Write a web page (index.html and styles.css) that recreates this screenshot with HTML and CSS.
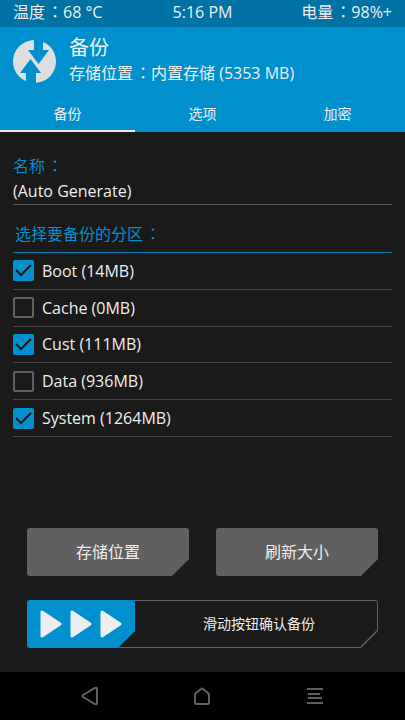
FILE: index.html
```html
<!DOCTYPE html>
<html lang="zh-CN">
<head>
<meta charset="utf-8">
<meta name="viewport" content="width=device-width, initial-scale=1">
<title>备份</title>
<link rel="stylesheet" href="styles.css">
</head>
<body>
<div class="status"><span>温度<span class="colon" lang="zh-TW">：</span>68 °C</span><span>5:16 PM</span><span>电量<span class="colon" lang="zh-TW">：</span>98%+</span></div>
<header class="header">
  <div class="brand">
    <svg class="logo" viewBox="0 0 43 43" aria-hidden="true">
      <circle cx="21.5" cy="21.5" r="21.5" fill="#dedede"/>
      <path fill="#0090cd" d="M21 0h9v10h6L25.500 24 15 10h6zM13 43V33H7l10.500-14L28 33h-5v10z"/>
    </svg>
    <div>
      <h1>备份</h1>
      <p>存储位置<span class="colon" lang="zh-TW">：</span>内置存储 (5353 MB)</p>
    </div>
  </div>
  <nav class="tabs">
    <a href="#backup" class="active" aria-current="page">备份</a>
    <a href="#options">选项</a>
    <a href="#encryption">加密</a>
  </nav>
</header>
<main class="main">
  <label class="caption" for="name">名称<span class="colon" lang="zh-TW">：</span></label>
  <input class="name" id="name" type="text" value="(Auto Generate)">
  <fieldset class="partitions">
    <legend>选择要备份的分区<span class="colon" lang="zh-TW">：</span></legend>
    <div class="list">
      <label><input type="checkbox" checked>Boot (14MB)</label>
      <label><input type="checkbox">Cache (0MB)</label>
      <label><input type="checkbox" checked>Cust (111MB)</label>
      <label><input type="checkbox">Data (936MB)</label>
      <label><input type="checkbox" checked>System (1264MB)</label>
    </div>
  </fieldset>
  <div class="actions">
    <div class="buttons">
      <button type="button">存储位置</button>
      <button type="button">刷新大小</button>
    </div>
    <button type="button" class="slider">
      <span class="handle">
        <svg viewBox="0 0 82 28" aria-hidden="true">
          <g fill="#eee" stroke="#eee" stroke-width="3" stroke-linejoin="round">
            <path d="M2 2v24l18-12zM32 2v24l18-12zM62 2v24l18-12z"/>
          </g>
        </svg>
      </span>
      <span class="hint">滑动按钮确认备份</span>
    </button>
  </div>
</main>
<nav class="navbar">
  <button type="button" aria-label="返回"><svg viewBox="0 0 20 20"><path d="M17 3v14q0 2-2 1L3 11q-1-1 0-2l12-7q2-1 2 1z"/></svg></button>
  <button type="button" aria-label="主页"><svg viewBox="0 0 20 20"><path d="M3 9q0-1 1-2l5-4q1-1 2 0l5 4q1 1 1 2v7q0 2-1 2H4q-1 0-1-2z"/></svg></button>
  <button type="button" aria-label="菜单"><svg viewBox="0 0 20 20"><path d="M2 3h16M3 8h12M3 12h14M2 17h16"/></svg></button>
</nav>
</body>
</html>
```
FILE: styles.css
```css
* { box-sizing: border-box; }

body {
  margin: 0;
  min-height: 100vh;
  display: flex;
  flex-direction: column;
  background: #1a1a1a;
  color: #eee;
  font: 16px/24px "Open Sans", "Noto Sans CJK SC", sans-serif;
}

button, input { font: inherit; color: inherit; }
h1, p { margin: 0; font-weight: 400; }

/* Full-width colon centred in its cell */
.colon {
  margin-left: 2px;
  font-family: "Noto Sans CJK TC", sans-serif;
  line-height: 1;
}

.status {
  display: grid;
  grid-template-columns: 1fr auto 1fr;
  height: 27px;
  padding: 0 13px;
  background: #0073a4;
}
.status > span:last-child { text-align: right; }

.header { background: #0090cd; }
.brand {
  display: flex;
  gap: 13px;
  padding: 7px 13px 0;
}
.logo { width: 43px; height: 43px; margin-top: 6px; }
h1 { font-size: 20px; line-height: 27px; }

.tabs { display: grid; grid-template-columns: repeat(3, 1fr); margin-top: 14px; }
.tabs a {
  height: 33px;
  border-bottom: 2px solid transparent;
  color: inherit;
  font-size: 14px;
  line-height: 30px;
  text-align: center;
  text-decoration: none;
}
.tabs .active { border-color: #eee; }

.main {
  flex: 1;
  display: flex;
  flex-direction: column;
  padding: 22px 13px 24px;
}
.caption { color: #0090cd; }
.name {
  width: 100%;
  height: 27px;
  padding: 0;
  border: 0;
  border-bottom: 1px solid #5a5a5a;
  background: none;
}

.partitions { margin: 17px 0 0; padding: 0; border: 0; min-width: 0; }
.partitions legend {
  width: 100%;
  height: 31px;
  padding: 0 2px;
  border-bottom: 1px solid #0082b8;
  color: #0090cd;
}
.list {
  display: grid;
  grid-auto-rows: 1fr;
  min-height: 184px;
}
.list label {
  display: flex;
  align-items: center;
  gap: 8px;
  border-bottom: 1px solid #444;
}
.list input {
  appearance: none;
  width: 21px;
  height: 21px;
  margin: 0;
  border: 2px solid #606060;
  border-radius: 2px;
}
.list input:checked {
  border: 0;
  background: #0090cd url("data:image/svg+xml,%3Csvg xmlns='http://www.w3.org/2000/svg' viewBox='0 0 21 21'%3E%3Cpath d='M3 10l5 5L18 5' fill='none' stroke='%231a1a1a' stroke-width='2'/%3E%3C/svg%3E");
}

.actions { margin-top: auto; padding: 0 14px; }
.buttons { display: grid; grid-template-columns: 1fr 1fr; gap: 27px; }
.buttons button {
  height: 48px;
  padding: 0;
  border: 0;
  border-radius: 3px;
  background: #606060;
  clip-path: polygon(0 0, 100% 0, 100% 31px, calc(100% - 17px) 100%, 0 100%);
}
.slider {
  display: flex;
  width: 100%;
  height: 48px;
  margin-top: 24px;
  padding: 0;
  border: 0;
  border-radius: 3px;
  background:
    linear-gradient(135deg, transparent calc(50% - 2px), #606060 calc(50% - 1px)) right bottom / 17px 17px no-repeat,
    #1a1a1a;
  box-shadow: inset 0 0 0 1px #606060;
  clip-path: polygon(0 0, 100% 0, 100% 31px, calc(100% - 17px) 100%, 0 100%);
}
.handle {
  flex: 0 0 108px;
  height: 48px;
  display: grid;
  place-items: center;
  border-radius: 3px;
  background: #0090cd;
  clip-path: polygon(0 0, 100% 0, 100% 31px, calc(100% - 17px) 100%, 0 100%);
}
.handle svg { width: 82px; height: 28px; }
.hint { flex: 1; align-self: center; padding-left: 5px; font-size: 14px; text-align: center; }

.navbar {
  display: flex;
  justify-content: space-around;
  align-items: center;
  height: 48px;
  padding: 0 34px;
  background: #000;
}
.navbar button { width: 48px; height: 48px; padding: 0; border: 0; background: none; }
.navbar svg {
  display: block;
  width: 20px;
  height: 20px;
  margin: auto;
  fill: none;
  stroke: #606060;
  stroke-width: 2;
}
```
